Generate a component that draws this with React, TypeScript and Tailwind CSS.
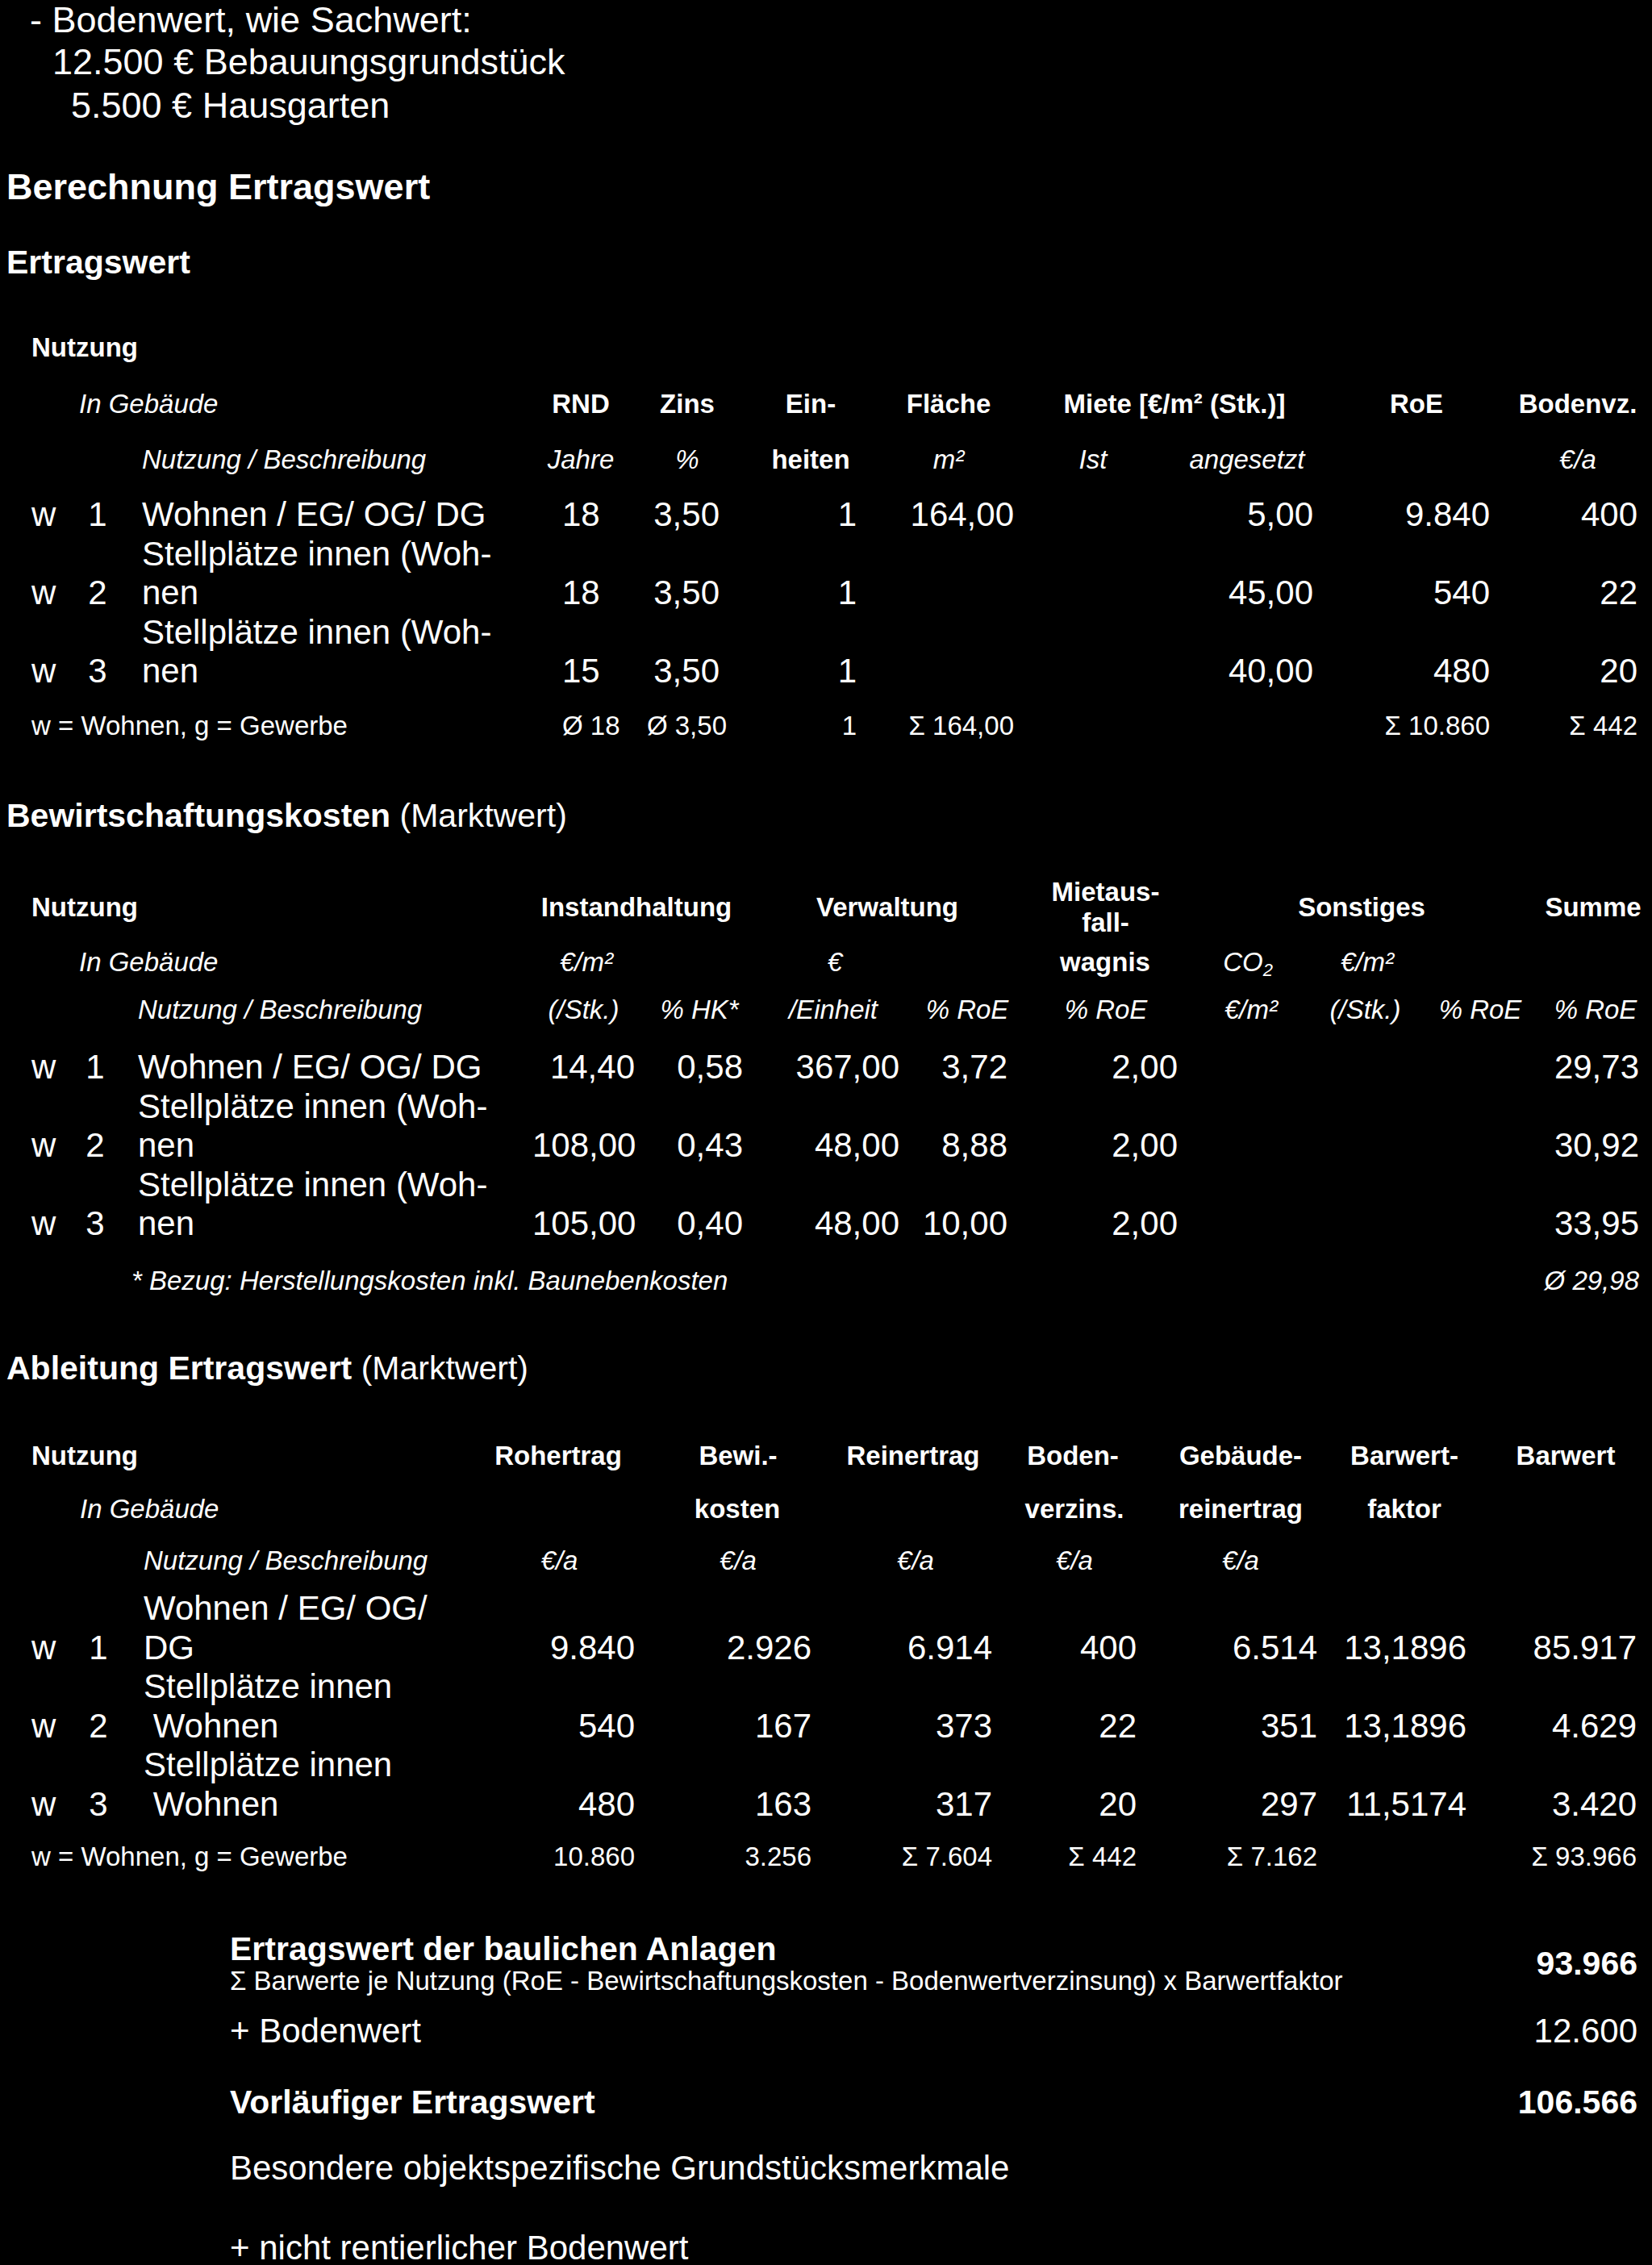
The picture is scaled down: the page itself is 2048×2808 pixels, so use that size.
import type { ReactNode } from 'react';

/** Column tracks per table (x starts at 39px). */
const T1 = 'grid grid-cols-[61px_42px_555px_46px_149px_170px_195px_196px_175px_219px_183px]';
const T2 = 'grid grid-cols-[61px_36px_524px_127px_134px_194px_134px_211px_160px_145px_140px_127px]';
const T3 = 'grid grid-cols-[61px_44px_456px_187px_219px_224px_179px_224px_185px_211px]';

const small = 'text-[33px] leading-[40px]';

/** Header cell: text centred in its column box (overflow spreads to both sides). */
function H({ className = '', children }: { className?: string; children?: ReactNode }) {
  return (
    <div className={`flex justify-center whitespace-nowrap ${className}`}>
      <span>{children}</span>
    </div>
  );
}

interface DataRowProps {
  grid: string;
  pad: string;
  nr: string;
  desc: ReactNode;
  values: string[];
}

function DataRow({ grid, pad, nr, desc, values }: DataRowProps) {
  return (
    <div className={`${grid} items-end`}>
      <div>w</div>
      <div className="text-center">{nr}</div>
      <div className={`whitespace-nowrap ${pad}`}>{desc}</div>
      {values.map((v, i) => (
        <div key={i} className="text-right whitespace-nowrap">
          {v}
        </div>
      ))}
    </div>
  );
}

function Ertragswert() {
  return (
    <div className="pl-[39px]">
      <div className="mt-[63px] text-[33px] leading-[40px] font-bold">Nutzung</div>
      <div className={`${T1} ${small} mt-[30px]`}>
        <div className="col-span-3 pl-[59px] italic">In Gebäude</div>
        <H className="font-bold">RND</H>
        <H className="pl-[69px] font-bold">Zins</H>
        <H className="pl-[56px] font-bold">Ein-</H>
        <H className="pl-[33px] font-bold">Fläche</H>
        <H className="col-span-2 pl-[27px] font-bold">Miete [€/m² (Stk.)]</H>
        <H className="pl-[37px] font-bold">RoE</H>
        <H className="pl-[35px] font-bold">Bodenvz.</H>
      </div>
      <div className={`${T1} ${small} mt-[29px]`}>
        <div className="col-span-3 pl-[137px] italic">Nutzung / Beschreibung</div>
        <H className="italic">Jahre</H>
        <H className="pl-[69px] italic">%</H>
        <H className="pl-[56px] font-bold">heiten</H>
        <H className="pl-[33px] italic">m²</H>
        <H className="italic">Ist</H>
        <H className="pl-[11px] italic">angesetzt</H>
        <div />
        <H className="pl-[35px] italic">€/a</H>
      </div>
      <div className="mt-[24px] text-[42px] leading-[48.5px]">
        <DataRow
          grid={T1}
          pad="pl-[34px]"
          nr="1"
          desc="Wohnen / EG/ OG/ DG"
          values={['18', '3,50', '1', '164,00', '', '5,00', '9.840', '400']}
        />
        <DataRow
          grid={T1}
          pad="pl-[34px]"
          nr="2"
          desc={
            <>
              Stellplätze innen (Woh-
              <br />
              nen
            </>
          }
          values={['18', '3,50', '1', '', '', '45,00', '540', '22']}
        />
        <DataRow
          grid={T1}
          pad="pl-[34px]"
          nr="3"
          desc={
            <>
              Stellplätze innen (Woh-
              <br />
              nen
            </>
          }
          values={['15', '3,50', '1', '', '', '40,00', '480', '20']}
        />
      </div>
      <div className={`${T1} ${small} mt-[23.5px] whitespace-nowrap`}>
        <div className="col-span-3">w = Wohnen, g = Gewerbe</div>
        <div className="-mr-[13px] text-right">Ø 18</div>
        <div className="-mr-[9px] text-right">Ø 3,50</div>
        <div className="text-right">1</div>
        <div className="text-right">Σ 164,00</div>
        <div />
        <div />
        <div className="text-right">Σ 10.860</div>
        <div className="text-right">Σ 442</div>
      </div>
    </div>
  );
}

function Bewirtschaftung() {
  return (
    <div className="pl-[39px]">
      <div className={`${T2} mt-[53px] items-center text-[33px] leading-[38px] font-bold`}>
        <div className="col-span-3">Nutzung</div>
        <H className="col-span-2 pr-[3px]">Instandhaltung</H>
        <H className="col-span-2 pl-[30px]">Verwaltung</H>
        <div className="pl-[32px] text-center">
          Mietaus-
          <br />
          fall-
        </div>
        <H className="col-span-3 pl-[11px]">Sonstiges</H>
        <H className="pl-[13px]">Summe</H>
      </div>
      <div className={`${T2} ${small} mt-[10px]`}>
        <div className="col-span-3 pl-[59px] italic">In Gebäude</div>
        <H className="pl-[7px] italic">€/m²</H>
        <div />
        <H className="pl-[34px] italic">€</H>
        <div />
        <H className="pl-[31px] font-bold">wagnis</H>
        <H className="pl-[14px] italic">
          CO<sub className="text-[22px]">2</sub>
        </H>
        <H className="pl-[5px] italic">€/m²</H>
        <div />
        <div />
      </div>
      <div className={`${T2} ${small} mt-[19px] italic`}>
        <div className="col-span-3 pl-[132px]">Nutzung / Beschreibung</div>
        <H>(/Stk.)</H>
        <H className="pl-[26px]">% HK*</H>
        <H className="pl-[30px]">/Einheit</H>
        <H className="pl-[34px]">% RoE</H>
        <H className="pl-[33px]">% RoE</H>
        <H className="pl-[22px]">€/m²</H>
        <H>(/Stk.)</H>
        <H>% RoE</H>
        <H className="pl-[19px]">% RoE</H>
      </div>
      <div className="mt-[27px] text-[42px] leading-[48.5px]">
        <DataRow
          grid={T2}
          pad="pl-[35px]"
          nr="1"
          desc="Wohnen / EG/ OG/ DG"
          values={['14,40', '0,58', '367,00', '3,72', '2,00', '', '', '', '29,73']}
        />
        <DataRow
          grid={T2}
          pad="pl-[35px]"
          nr="2"
          desc={
            <>
              Stellplätze innen (Woh-
              <br />
              nen
            </>
          }
          values={['108,00', '0,43', '48,00', '8,88', '2,00', '', '', '', '30,92']}
        />
        <DataRow
          grid={T2}
          pad="pl-[35px]"
          nr="3"
          desc={
            <>
              Stellplätze innen (Woh-
              <br />
              nen
            </>
          }
          values={['105,00', '0,40', '48,00', '10,00', '2,00', '', '', '', '33,95']}
        />
      </div>
      <div className={`${T2} ${small} mt-[26.5px] italic whitespace-nowrap`}>
        <div className="col-span-11 pl-[124px]">* Bezug: Herstellungskosten inkl. Baunebenkosten</div>
        <div className="text-right">Ø 29,98</div>
      </div>
    </div>
  );
}

function Ableitung() {
  return (
    <div className="pl-[39px]">
      <div className={`${T3} ${small} mt-[66.5px] font-bold`}>
        <div className="col-span-3">Nutzung</div>
        <H className="pr-[3px]">Rohertrag</H>
        <H className="pl-[37px]">Bewi.-</H>
        <H className="pl-[28px]">Reinertrag</H>
        <H className="pl-[21px]">Boden-</H>
        <H className="pl-[34px]">Gebäude-</H>
        <H className="pl-[31px]">Barwert-</H>
        <H className="pl-[35px]">Barwert</H>
      </div>
      <div className={`${T3} ${small} mt-[26px]`}>
        <div className="col-span-3 pl-[60px] italic">In Gebäude</div>
        <div />
        <H className="pl-[35px] font-bold">kosten</H>
        <div />
        <H className="pl-[25px] font-bold">verzins.</H>
        <H className="pl-[34px] font-bold">reinertrag</H>
        <H className="pl-[31px] font-bold">faktor</H>
        <div />
      </div>
      <div className={`${T3} ${small} mt-[24px] italic`}>
        <div className="col-span-3 pl-[139px]">Nutzung / Beschreibung</div>
        <H>€/a</H>
        <H className="pl-[37px]">€/a</H>
        <H className="pl-[34px]">€/a</H>
        <H className="pl-[25px]">€/a</H>
        <H className="pl-[34px]">€/a</H>
        <div />
        <div />
      </div>
      <div className="mt-[15px] text-[42px] leading-[48.5px]">
        <DataRow
          grid={T3}
          pad="pl-[34px]"
          nr="1"
          desc={
            <>
              Wohnen / EG/ OG/
              <br />
              DG
            </>
          }
          values={['9.840', '2.926', '6.914', '400', '6.514', '13,1896', '85.917']}
        />
        <DataRow
          grid={T3}
          pad="pl-[34px]"
          nr="2"
          desc={
            <>
              Stellplätze innen
              <br />
              {'\u00a0'}Wohnen
            </>
          }
          values={['540', '167', '373', '22', '351', '13,1896', '4.629']}
        />
        <DataRow
          grid={T3}
          pad="pl-[34px]"
          nr="3"
          desc={
            <>
              Stellplätze innen
              <br />
              {'\u00a0'}Wohnen
            </>
          }
          values={['480', '163', '317', '20', '297', '11,5174', '3.420']}
        />
      </div>
      <div className={`${T3} ${small} mt-[21px] whitespace-nowrap`}>
        <div className="col-span-3">w = Wohnen, g = Gewerbe</div>
        <div className="text-right">10.860</div>
        <div className="text-right">3.256</div>
        <div className="text-right">Σ 7.604</div>
        <div className="text-right">Σ 442</div>
        <div className="text-right">Σ 7.162</div>
        <div />
        <div className="text-right">Σ 93.966</div>
      </div>
    </div>
  );
}

function Summary() {
  return (
    <div className="pl-[285px]">
      <div className="mt-[72.5px] flex items-center justify-between">
        <div>
          <div className="text-[41px] leading-[42px] font-bold">Ertragswert der baulichen Anlagen</div>
          <div className="text-[33px] leading-[38px]">
            Σ Barwerte je Nutzung (RoE - Bewirtschaftungskosten - Bodenwertverzinsung) x Barwertfaktor
          </div>
        </div>
        <div className="text-[41px] font-bold">93.966</div>
      </div>
      <div className="mt-[19.5px] flex justify-between text-[42px] leading-[48.5px]">
        <div>+ Bodenwert</div>
        <div>12.600</div>
      </div>
      <div className="mt-[40px] flex justify-between text-[41px] leading-[46px] font-bold">
        <div>Vorläufiger Ertragswert</div>
        <div>106.566</div>
      </div>
      <div className="mt-[35.5px] text-[42px] leading-[48.5px]">Besondere objektspezifische Grundstücksmerkmale</div>
      <div className="mt-[54.5px] text-[42px] leading-[40px]">+ nicht rentierlicher Bodenwert</div>
    </div>
  );
}

export default function App() {
  return (
    <div className="min-h-screen bg-black text-white font-['Liberation_Sans',Arial,Helvetica,sans-serif]">
      <div className="w-[2030px]">
        <div className="pl-[37px] text-[45px] leading-[50px]">- Bodenwert, wie Sachwert:</div>
        <div className="text-[45px] leading-[53.5px]">
          <div className="pl-[65px]">12.500 € Bebauungsgrundstück</div>
          <div className="pl-[88px]">5.500 € Hausgarten</div>
        </div>

        <h1 className="mt-[50px] pl-[8px] text-[45px] leading-[50px] font-bold">Berechnung Ertragswert</h1>
        <h2 className="mt-[45px] pl-[8px] text-[41px] leading-[46px] font-bold">Ertragswert</h2>
        <Ertragswert />

        <h2 className="mt-[68px] pl-[8px] text-[41px] leading-[46px]">
          <span className="font-bold">Bewirtschaftungskosten</span> (Marktwert)
        </h2>
        <Bewirtschaftung />

        <h2 className="mt-[64.5px] pl-[8px] text-[41px] leading-[46px]">
          <span className="font-bold">Ableitung Ertragswert</span> (Marktwert)
        </h2>
        <Ableitung />

        <Summary />
      </div>
    </div>
  );
}
